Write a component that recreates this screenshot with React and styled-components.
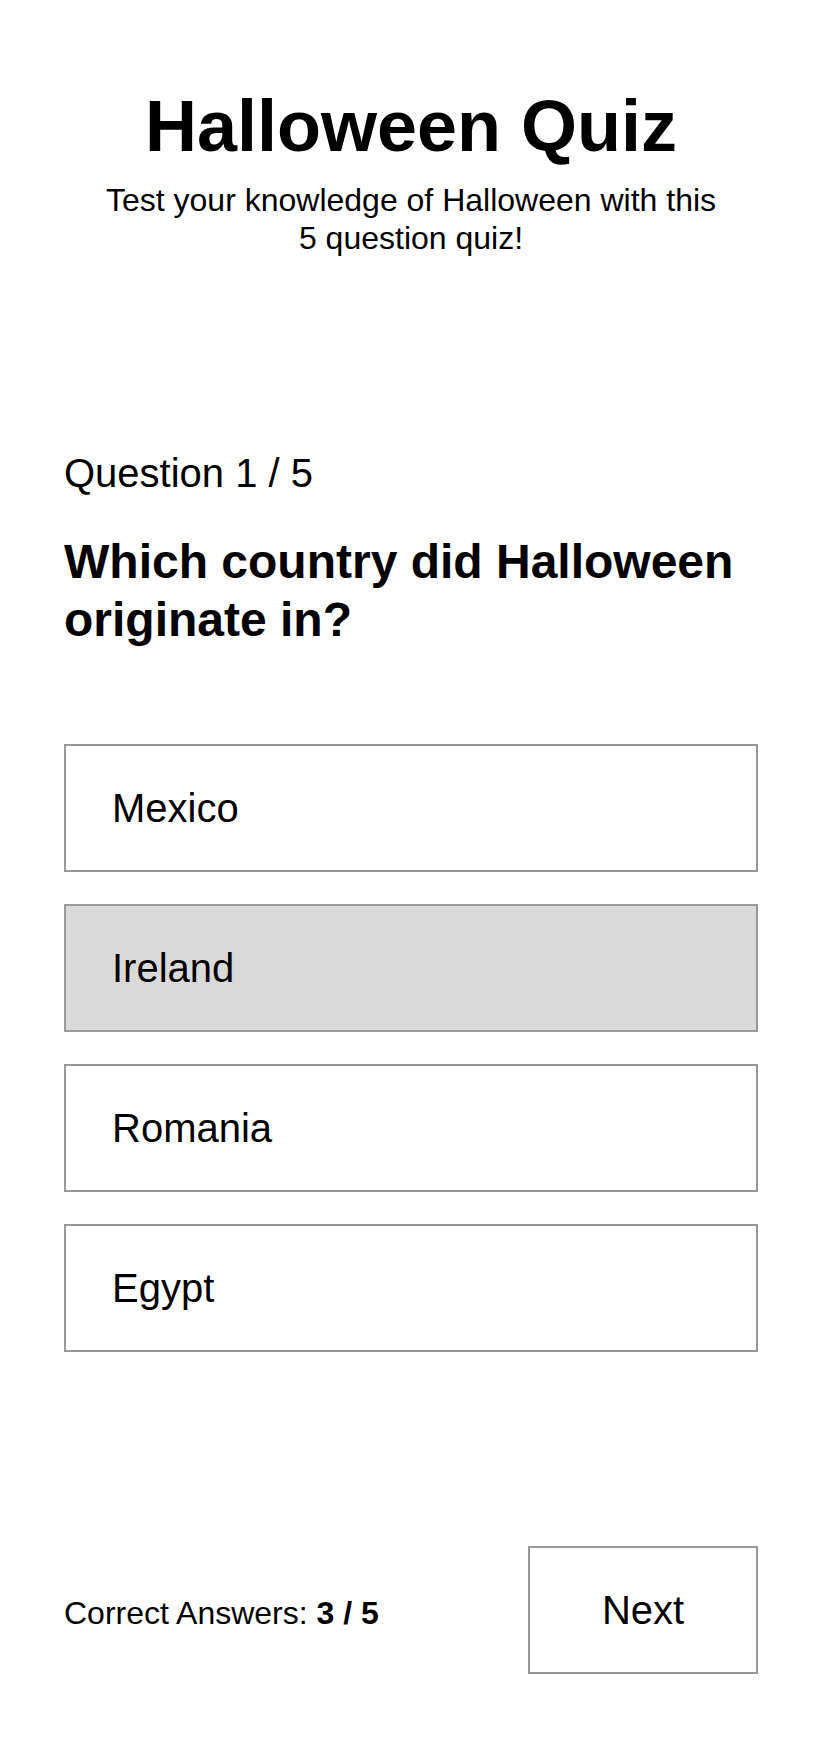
import React from 'react';
import styled, { createGlobalStyle } from 'styled-components';

const GlobalStyle = createGlobalStyle`
  body {
    margin: 0;
    background: #ffffff;
    color: #000000;
    font-family: "Liberation Sans", Helvetica, Arial, sans-serif;
  }
`;

const Page = styled.div`
  display: flex;
  flex-direction: column;
  padding: 0 64px 64px;
`;

const Header = styled.header`
  display: flex;
  flex-direction: column;
  align-items: center;
  text-align: center;
  .title {
    margin: 83px 0 0;
    font-size: 72px;
    line-height: 86px;
    font-weight: bold;
  }
  .subtitle {
    margin: 12px 0 0;
    max-width: 620px;
    font-size: 32px;
    line-height: 38px;
  }
`;

const QuestionCount = styled.p`
  margin: 192px 0 0;
  font-size: 40px;
  line-height: 48px;
`;

const QuestionText = styled.h2`
  margin: 36px 0 0;
  font-size: 48px;
  line-height: 58px;
  font-weight: bold;
`;

const Options = styled.div`
  display: flex;
  flex-direction: column;
  gap: 32px;
  margin-top: 95px;
`;

const Option = styled.div`
  box-sizing: border-box;
  height: 128px;
  display: flex;
  align-items: center;
  padding: 0 46px;
  border: 2px solid #999999;
  background: ${(p) => (p.$selected ? '#d9d9d9' : '#ffffff')};
  font-size: 40px;
`;

const Footer = styled.div`
  display: flex;
  justify-content: space-between;
  align-items: center;
  margin-top: 194px;
  .score {
    margin: 6px 0 0;
    font-size: 32px;
  }
`;

const NextButton = styled.button`
  box-sizing: border-box;
  width: 230px;
  height: 128px;
  border: 2px solid #999999;
  background: #ffffff;
  color: #000000;
  font-family: inherit;
  font-size: 40px;
  padding: 0;
`;

const data = {
  current: 1,
  total: 5,
  question: 'Which country did Halloween originate in?',
  options: ['Mexico', 'Ireland', 'Romania', 'Egypt'],
  selected: 1,
  correct: 3,
};

export default function App() {
  return (
    <Page>
      <GlobalStyle />
      <Header>
        <h1 className="title">Halloween Quiz</h1>
        <p className="subtitle">Test your knowledge of Halloween with this 5 question quiz!</p>
      </Header>
      <QuestionCount>Question {data.current} / {data.total}</QuestionCount>
      <QuestionText>{data.question}</QuestionText>
      <Options>
        {data.options.map((opt, i) => (
          <Option key={opt} $selected={i === data.selected}>{opt}</Option>
        ))}
      </Options>
      <Footer>
        <p className="score">Correct Answers: <b>{data.correct} / {data.total}</b></p>
        <NextButton>Next</NextButton>
      </Footer>
    </Page>
  );
}
